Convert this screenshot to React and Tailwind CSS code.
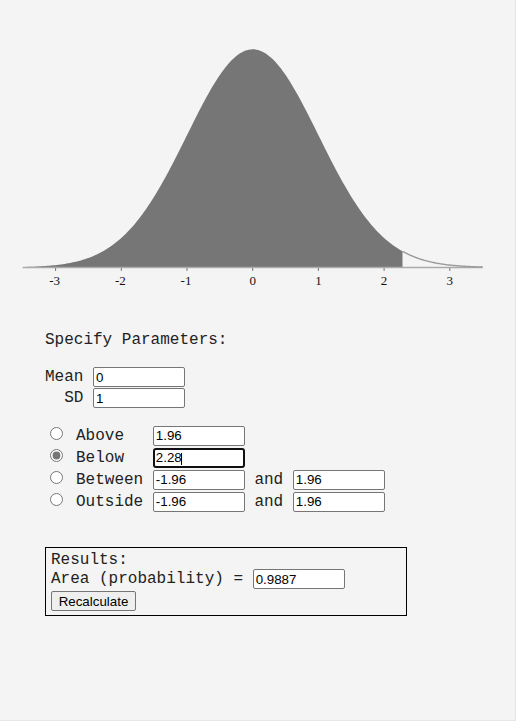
import React from "react";

const MONO = "font-['Liberation_Mono','Courier_New',monospace]";

// normal curve geometry, in px of the chart
const CX = 252.7;
const UNIT = 65.7;
const BASE = 267.5;
const PEAK = 218.2;

function px(z) {
  return CX + z * UNIT;
}
function py(z) {
  return BASE - PEAK * Math.exp(-(z * z) / 2);
}

function curvePoints(from, to, steps = 200) {
  const pts = [];
  for (let i = 0; i <= steps; i++) {
    const z = from + ((to - from) * i) / steps;
    pts.push(`${px(z).toFixed(2)},${py(z).toFixed(2)}`);
  }
  return pts;
}

function Chart({ below }) {
  const shaded = curvePoints(-3.5, below);
  const fillPath = `M${px(-3.5)},${BASE} L${shaded.join(" L")} L${px(below)},${BASE} Z`;
  const tail = `M${curvePoints(below, 3.5, 80).join(" L")}`;
  const ticks = [-3, -2, -1, 0, 1, 2, 3];

  return (
    <svg width="515" height="300" className="block">
      <path d={fillPath} fill="#767676" />
      <line x1={px(-3.5)} y1="267.5" x2={px(3.5)} y2="267.5" stroke="#aaaaaa" strokeWidth="1.6" />
      <path d={tail} fill="none" stroke="#9a9a9a" strokeWidth="1.4" />
      {ticks.map((t) => (
        <g key={t}>
          <line x1={px(t)} y1="268" x2={px(t)} y2="271" stroke="#777777" strokeWidth="1" />
          <text
            x={px(t) + (t < 0 ? -1 : 0)}
            y="285"
            textAnchor="middle"
            fontSize="13"
            fill="#111111"
            fontFamily="'Liberation Serif', 'Times New Roman', serif"
          >
            {t}
          </text>
        </g>
      ))}
    </svg>
  );
}

function Field({ value, focused }) {
  if (focused) {
    return (
      <div className="relative">
        <input
          readOnly
          value={value}
          className="block h-[20px] w-[92px] rounded-[3px] border-2 border-[#101010] bg-white pl-[1px] font-['Liberation_Sans',Arial,sans-serif] text-[13.333px] text-black outline-none"
        />
        <span className="absolute left-[28px] top-[5px] h-[12px] w-[1px] bg-black" />
      </div>
    );
  }
  return (
    <input
      readOnly
      value={value}
      className="block h-[20px] w-[92px] rounded-[2px] border border-[#767676] bg-white px-[2px] font-['Liberation_Sans',Arial,sans-serif] text-[13.333px] text-black outline-none"
    />
  );
}

function RadioRow({ label, checked, from, to }) {
  return (
    <div className="flex h-[20px] items-center">
      <input
        type="radio"
        name="mode"
        readOnly
        checked={checked}
        className="mb-[4px] ml-[5px] mr-[13px] h-[13px] w-[13px] accent-[#767676]"
      />
      <span className="whitespace-pre leading-[18px]">{label}</span>
      <Field value={from} focused={label.trim() === "Below"} />
      {to !== undefined && (
        <>
          <span className="whitespace-pre leading-[18px]"> and </span>
          <Field value={to} />
        </>
      )}
    </div>
  );
}

export default function App() {
  return (
    <div className={`box-content h-[720px] w-[515px] border-r border-b border-[#e6e6e6] bg-[#f4f4f4] text-[16px] text-[#222] ${MONO}`}>
      <Chart below={2.28} />

      <div className="pl-[45px] pt-[31px]">
        <div className="leading-[18px]">Specify Parameters:</div>

        {/* Mean / SD */}
        <div className="mt-[17.5px]">
          <div className="flex h-[21px] items-center">
            <span className="whitespace-pre leading-[18px]">Mean </span>
            <Field value="0" />
          </div>
          <div className="flex h-[21px] items-center">
            <span className="whitespace-pre leading-[18px]">  SD </span>
            <Field value="1" />
          </div>
        </div>

        {/* Region choice */}
        <div className="mt-[17px] flex flex-col gap-[2px]">
          <RadioRow label="Above   " from="1.96" />
          <RadioRow label="Below   " checked from="2.28" />
          <RadioRow label="Between " from="-1.96" to="1.96" />
          <RadioRow label="Outside " from="-1.96" to="1.96" />
        </div>

        {/* Results */}
        <div className="mt-[35px] w-[362px] border border-black pb-[4px] pl-[5px] pt-[3px]">
          <div className="leading-[18px]">Results:</div>
          <div className="flex h-[21px] items-center">
            <span className="whitespace-pre leading-[18px]">Area (probability) = </span>
            <Field value="0.9887" />
          </div>
          <button className="mt-[1px] block h-[20px] w-[85px] rounded-[2px] border border-[#767676] bg-[#efefef] font-['Liberation_Sans',Arial,sans-serif] text-[13.333px] text-black">
            Recalculate
          </button>
        </div>
      </div>
    </div>
  );
}
